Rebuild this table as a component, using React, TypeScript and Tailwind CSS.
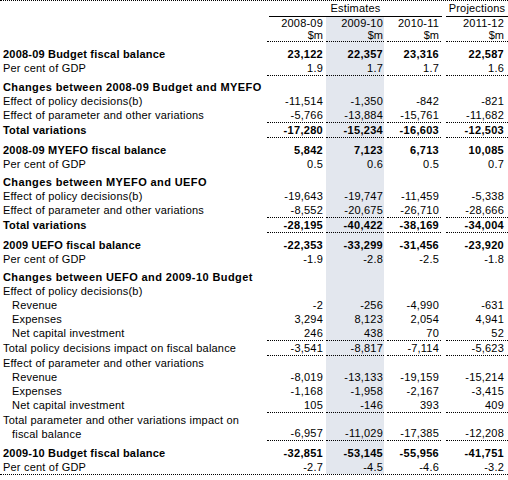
import React from "react";

type Row = {
  label: string;
  label2?: string;
  kind?: "bal" | "head" | "bold";
  indent?: boolean;
  v?: string[];
  border?: boolean;
  last?: boolean;
};

const rows: Row[] = [
  { label: "2008-09 Budget fiscal balance", kind: "bal", v: ["23,122", "22,357", "23,316", "22,587"] },
  { label: "Per cent of GDP", v: ["1.9", "1.7", "1.7", "1.6"], border: true },
  { label: "Changes between 2008-09 Budget and MYEFO", kind: "head" },
  { label: "Effect of policy decisions(b)", v: ["-11,514", "-1,350", "-842", "-821"] },
  { label: "Effect of parameter and other variations", v: ["-5,766", "-13,884", "-15,761", "-11,682"], border: true },
  { label: "Total variations", kind: "bold", v: ["-17,280", "-15,234", "-16,603", "-12,503"], border: true },
  { label: "2008-09 MYEFO fiscal balance", kind: "bal", v: ["5,842", "7,123", "6,713", "10,085"] },
  { label: "Per cent of GDP", v: ["0.5", "0.6", "0.5", "0.7"] },
  { label: "Changes between MYEFO and UEFO", kind: "head" },
  { label: "Effect of policy decisions(b)", v: ["-19,643", "-19,747", "-11,459", "-5,338"] },
  { label: "Effect of parameter and other variations", v: ["-8,552", "-20,675", "-26,710", "-28,666"], border: true },
  { label: "Total variations", kind: "bold", v: ["-28,195", "-40,422", "-38,169", "-34,004"], border: true },
  { label: "2009 UEFO fiscal balance", kind: "bal", v: ["-22,353", "-33,299", "-31,456", "-23,920"] },
  { label: "Per cent of GDP", v: ["-1.9", "-2.8", "-2.5", "-1.8"] },
  { label: "Changes between UEFO and 2009-10 Budget", kind: "head" },
  { label: "Effect of policy decisions(b)" },
  { label: "Revenue", indent: true, v: ["-2", "-256", "-4,990", "-631"] },
  { label: "Expenses", indent: true, v: ["3,294", "8,123", "2,054", "4,941"] },
  { label: "Net capital investment", indent: true, v: ["246", "438", "70", "52"], border: true },
  { label: "Total policy decisions impact on fiscal balance", v: ["-3,541", "-8,817", "-7,114", "-5,623"], border: true },
  { label: "Effect of parameter and other variations" },
  { label: "Revenue", indent: true, v: ["-8,019", "-13,133", "-19,159", "-15,214"] },
  { label: "Expenses", indent: true, v: ["-1,168", "-1,958", "-2,167", "-3,415"] },
  { label: "Net capital investment", indent: true, v: ["105", "-146", "393", "409"], border: true },
  {
    label: "Total parameter and other variations impact on",
    label2: "fiscal balance",
    v: ["-6,957", "-11,029", "-17,385", "-12,208"],
    border: true,
  },
  { label: "2009-10 Budget fiscal balance", kind: "bal", v: ["-32,851", "-53,145", "-55,956", "-41,751"] },
  { label: "Per cent of GDP", v: ["-2.7", "-4.5", "-4.6", "-3.2"], last: true },
];

const grid = "grid grid-cols-[266px_60px_58px_58px_66px]";
// per column: outer margins (for the dotted rules) and right padding of the figure
const cellPos = ["ml-px mr-[3px] pr-0", "pr-px bg-[#e3e7ee]", "ml-[3px] mr-px pr-[2px]", "ml-[4px] pr-[4px]"];

function DataRow({ r }: { r: Row }) {
  const pad = r.kind === "bal" ? "pt-[5px]" : r.kind === "head" ? "pt-[4px]" : "";
  const bold = r.kind === "bal" || r.kind === "head" || r.kind === "bold";
  const rule = r.border ? "border-b border-dotted border-black" : "";

  return (
    <div className={`${grid} ${r.last ? "border-b border-dotted border-black" : ""}`}>
      <div
        className={`${pad} ${r.indent ? "pl-[12px]" : "pl-[3px]"} ${
          r.kind === "head" ? "font-bold tracking-[0.4px] whitespace-nowrap" : bold ? "font-bold tracking-[0.2px]" : "tracking-[0.2px]"
        }`}
      >
        <div>{r.label}</div>
        {r.label2 && <div className="pl-[9px]">{r.label2}</div>}
      </div>
      {[0, 1, 2, 3].map((i) => (
        <div
          key={i}
          className={`${pad} ${cellPos[i]} ${rule} flex items-end justify-end ${bold ? "font-bold tracking-[0.3px]" : "tracking-[0.2px]"}`}
        >
          {r.v ? r.v[i] : ""}
        </div>
      ))}
    </div>
  );
}

export default function App() {
  return (
    <div className="w-[508px] h-[480px] bg-white text-black text-[11px] leading-[14px] font-['Liberation_Sans',Arial,sans-serif]">
      <div className="border-t border-dotted border-black">
        {/* header: Estimates / Projections */}
        <div className={`${grid} h-[16px]`}>
          <div />
          <div className="col-span-3 ml-[3px] border-b border-black text-center leading-[15px] tracking-[0.2px]">Estimates</div>
          <div className="ml-[4px] border-b border-black text-center leading-[15px] tracking-[0.2px]">Projections</div>
        </div>
        <div className={`${grid} leading-[13px] tracking-[0.2px]`}>
          <div />
          <div className="text-right pr-0 ml-px mr-[3px]">2008-09</div>
          <div className="text-right pr-px bg-[#e3e7ee]">2009-10</div>
          <div className="text-right ml-[3px] mr-px pr-[2px]">2010-11</div>
          <div className="text-right ml-[4px] pr-[4px]">2011-12</div>
        </div>
        <div className={`${grid} leading-[11px]`}>
          <div />
          {[0, 1, 2, 3].map((i) => (
            <div key={i} className={`text-right border-b border-dotted border-black ${cellPos[i]}`}>
              $m
            </div>
          ))}
        </div>
        {rows.map((r, idx) => (
          <DataRow key={idx} r={r} />
        ))}
      </div>
    </div>
  );
}
